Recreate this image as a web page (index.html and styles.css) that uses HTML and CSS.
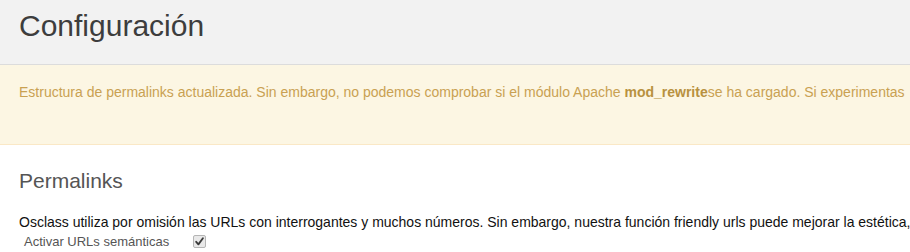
FILE: index.html
```html
<!DOCTYPE html>
<html lang="es">
<head>
    <meta charset="UTF-8">
    <title>Configuración</title>
    <link rel="stylesheet" href="styles.css">
</head>
<body>
    <div class="page-header">
        <h1>Configuración</h1>
    </div>
    <div class="flash-warning">
        <span class="flash-text">Estructura de permalinks actualizada. Sin embargo, no podemos comprobar si el módulo Apache <b>mod_rewrite</b>se ha cargado. Si experimentas</span>
    </div>
    <div class="content">
        <h2>Permalinks</h2>
        <p class="help-text"><span>Osclass utiliza por omisión las URLs con interrogantes y muchos números. Sin embargo, nuestra función friendly urls puede mejorar la estética,</span></p>
        <div class="form-row">
            <label for="rewrite">Activar URLs semánticas</label>
            <span class="check" id="rewrite">
                <svg width="9" height="9" viewBox="0 0 9 9"><path d="M1.2 4.8 L3.4 7.4 L7.9 1.2" fill="none" stroke="#3a3a3a" stroke-width="1.8" stroke-linecap="round" stroke-linejoin="round"/></svg>
            </span>
        </div>
    </div>
</body>
</html>
```

FILE: styles.css
```css
body {
    margin: 0;
    font-family: "Liberation Sans", Arial, sans-serif;
    background-color: #fff;
    overflow: hidden;
}
.page-header {
    background-color: #f2f2f2;
    border-bottom: 1px solid #dcdcdc;
    height: 65px;
    padding: 0 19px;
    box-sizing: border-box;
}
.page-header h1 {
    margin: 0;
    padding-top: 7px;
    font-size: 30px;
    font-weight: normal;
    color: #3d3d3d;
    line-height: 38px;
}
.flash-warning {
    background-color: #fcf6e3;
    border-bottom: 1px solid #fae8c6;
    color: #c9a152;
    font-size: 14px;
    height: 80px;
    box-sizing: border-box;
    padding: 19px 19px 0;
    white-space: nowrap;
    overflow: hidden;
}
.flash-warning b {
    color: #b8913f;
}
.content {
    padding: 0 19px;
}
.content h2 {
    margin: 22px 0 0;
    font-size: 21px;
    font-weight: normal;
    color: #555;
    line-height: 28px;
}
.help-text {
    margin: 18px 0 0;
    font-size: 15px;
    color: #111;
    white-space: nowrap;
    line-height: 18px;
}
.help-text span {
    display: inline-block;
    transform: scaleX(0.933);
    transform-origin: left center;
}
.form-row {
    display: flex;
    align-items: center;
    padding-left: 5px;
    height: 20px;
}
.form-row label {
    font-size: 13px;
    color: #555;
    width: 169px;
}
.check {
    width: 11px;
    height: 11px;
    border: 1px solid #b5b5b5;
    border-radius: 2px;
    background-color: #e9e9e9;
    display: flex;
    align-items: center;
    justify-content: center;
}
```
